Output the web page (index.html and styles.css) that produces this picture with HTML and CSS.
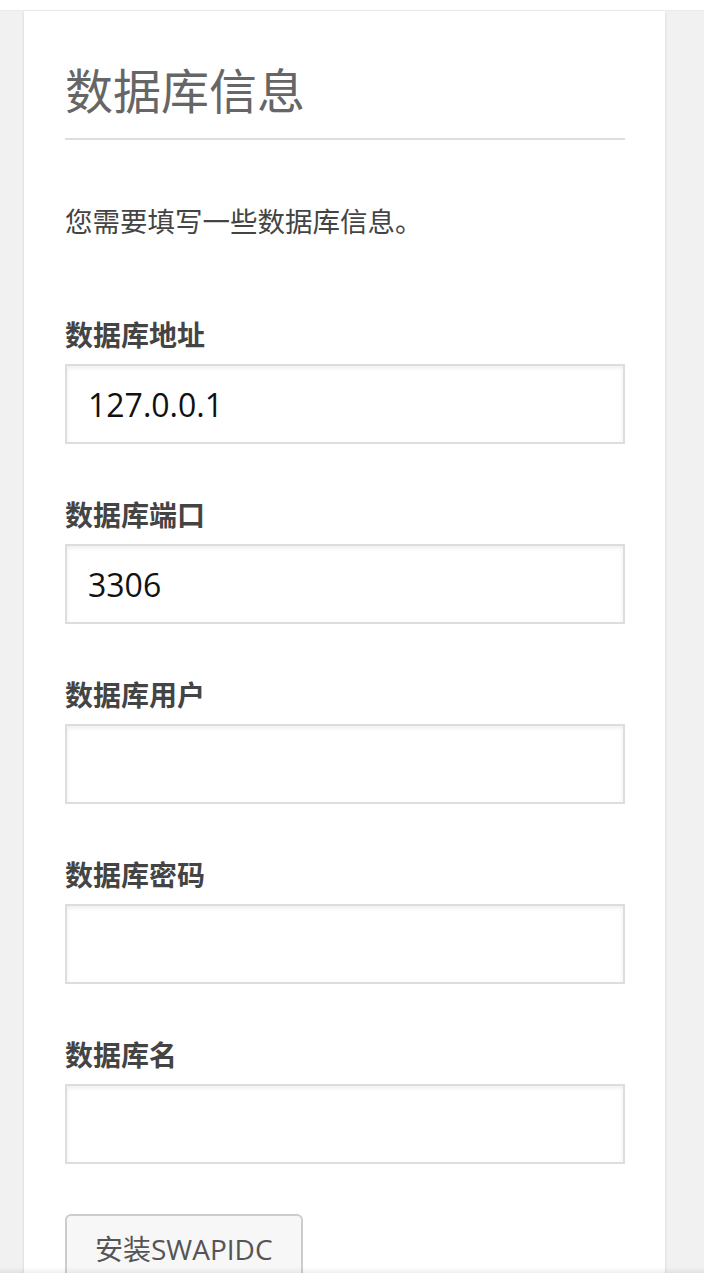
FILE: index.html
```html
<!DOCTYPE html>
<html lang="zh-CN">
<head>
    <meta charset="UTF-8">
    <meta name="viewport" content="width=device-width, initial-scale=1.0">
    <title>SWAPIDC 安装</title>
    <link rel="stylesheet" href="styles.css">
</head>
<body>
    <div class="top-strip"></div>
    <div class="install-card">
        <h1>数据库信息</h1>
        <p class="intro">您需要填写一些数据库信息。</p>
        <form class="install-form">
            <div class="field">
                <label for="dbhost">数据库地址</label>
                <input type="text" id="dbhost" value="127.0.0.1">
            </div>
            <div class="field">
                <label for="dbport">数据库端口</label>
                <input type="text" id="dbport" value="3306">
            </div>
            <div class="field">
                <label for="dbuser">数据库用户</label>
                <input type="text" id="dbuser">
            </div>
            <div class="field">
                <label for="dbpass">数据库密码</label>
                <input type="password" id="dbpass">
            </div>
            <div class="field">
                <label for="dbname">数据库名</label>
                <input type="text" id="dbname">
            </div>
            <button type="submit" class="install-btn">安装SWAPIDC</button>
        </form>
    </div>
    <div class="bottom-shade"></div>
</body>
</html>
```

FILE: styles.css
```css
html {
    background-color: #f1f1f1;
}
body {
    margin: 0;
    font-family: "Open Sans", "Noto Sans CJK SC", sans-serif;
    color: #444;
}
.top-strip {
    height: 10px;
    background-color: #fff;
    border-bottom: 1px solid #ececec;
}
.install-card {
    width: 560px;
    margin-left: 24px;
    padding: 0 40px 40px 41px;
    background-color: #fff;
    box-shadow: 0 1px 3px rgba(0, 0, 0, 0.13);
}
h1 {
    margin: 0;
    padding-top: 49px;
    padding-bottom: 16px;
    border-bottom: 2px solid #ddd;
    font-size: 48px;
    font-weight: normal;
    line-height: 62px;
    color: #666;
}
.intro {
    margin: 62px 0 0;
    font-size: 27.5px;
    line-height: 40px;
    color: #444;
}
.install-form {
    margin-top: 73px;
}
.field {
    margin-bottom: 51px;
}
.field label {
    display: block;
    font-size: 28px;
    font-weight: bold;
    line-height: 40px;
    color: #444;
    margin-bottom: 9px;
}
.field input {
    display: block;
    box-sizing: border-box;
    width: 100%;
    height: 80px;
    margin: 0;
    padding: 0 21px;
    border: 2px solid #ddd;
    box-shadow: inset 0 2px 4px rgba(0, 0, 0, 0.07);
    font-family: "Open Sans", sans-serif;
    font-size: 32px;
    color: #111;
    background-color: #fff;
    outline: none;
}
.install-btn {
    display: block;
    box-sizing: border-box;
    height: 68px;
    margin-top: -1px;
    padding: 0 28px;
    border: 2px solid #ccc;
    border-radius: 6px;
    background-color: #f7f7f7;
    font-family: "Open Sans", "Noto Sans CJK SC", sans-serif;
    font-size: 28px;
    color: #555;
    cursor: pointer;
}
.bottom-shade {
    position: fixed;
    left: 0;
    right: 0;
    bottom: 0;
    height: 6px;
    background: linear-gradient(to bottom, rgba(0, 0, 0, 0), rgba(0, 0, 0, 0.06));
}
```
